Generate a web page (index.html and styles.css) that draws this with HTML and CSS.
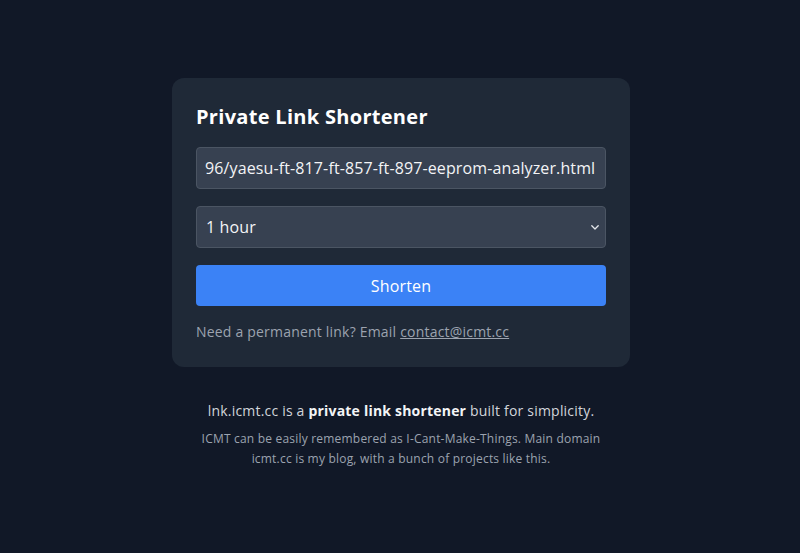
FILE: index.html
```html
<!DOCTYPE html>
<html lang="en">
<head>
<meta charset="utf-8">
<title>Private Link Shortener</title>
<link rel="stylesheet" href="styles.css">
</head>
<body>
<main class="page">
  <section class="card">
    <h1 class="title">Private Link Shortener</h1>
    <form class="form">
      <input class="field url" type="text" value="96/yaesu-ft-817-ft-857-ft-897-eeprom-analyzer.html">
      <div class="select-wrap">
        <select class="field select">
          <option>1 hour</option>
          <option>1 day</option>
          <option>1 week</option>
        </select>
        <svg class="chevron" viewBox="0 0 8 5"><path d="M0.8 0.8l3.2 3.2 3.2-3.2" fill="none" stroke="#e5e7eb" stroke-width="1.3" stroke-linecap="round" stroke-linejoin="round"/></svg>
      </div>
      <button class="btn" type="button">Shorten</button>
    </form>
    <p class="note">Need a permanent link? Email <a href="#">contact@icmt.cc</a></p>
  </section>
  <footer class="footer">
    <p class="lead">lnk.icmt.cc is a <strong>private link shortener</strong> built for simplicity.</p>
    <p class="small">ICMT can be easily remembered as I-Cant-Make-Things. Main domain icmt.cc is my blog, with a bunch of projects like this.</p>
  </footer>
</main>
</body>
</html>
```
FILE: styles.css
```css
* { box-sizing: border-box; }
html, body { margin: 0; padding: 0; }
body {
  background: #111827;
  font-family: "Open Sans", "Noto Sans", sans-serif;
  color: #f3f4f6;
  height: 553px;
  letter-spacing: 0.2px;
}
.page {
  display: flex;
  flex-direction: column;
  align-items: center;
  padding-top: 78px;
  padding-left: 2px;
}
.card {
  width: 458px;
  background: #1f2937;
  border-radius: 12px;
  padding: 24px 24px 25px;
}
.title {
  margin: 0 0 16px;
  padding-top: 1px;
  font-size: 20px;
  line-height: 28px;
  font-weight: 700;
  color: #ffffff;
  letter-spacing: 0.3px;
}
.form {
  display: flex;
  flex-direction: column;
  gap: 17px;
}
.field {
  display: block;
  width: 100%;
  height: 42px;
  padding: 0 9px;
  background: #374151;
  border: 1px solid #4b5563;
  border-radius: 4px;
  color: #f3f4f6;
  font-family: inherit;
  font-size: 16px;
  letter-spacing: 0.15px;
  outline: none;
}
.url {
  padding: 0 2px 0 8px;
  letter-spacing: 0.12px;
}
.select-wrap { position: relative; }
.select {
  appearance: none;
  -webkit-appearance: none;
  padding-left: 9px;
}
.chevron {
  position: absolute;
  right: 7px;
  top: 19px;
  width: 8px;
  height: 5px;
  pointer-events: none;
}
.btn {
  height: 41px;
  border: 0;
  border-radius: 4px;
  background: #3b82f6;
  color: #ffffff;
  font-family: inherit;
  font-size: 16px;
  letter-spacing: 0.2px;
}
.note {
  margin: 16px 0 0;
  font-size: 14px;
  line-height: 20px;
  color: #9ca3af;
}
.note a { color: #9ca3af; text-decoration: underline; }
.footer {
  margin-top: 34px;
  width: 430px;
  text-align: center;
}
.lead {
  margin: 0;
  font-size: 14px;
  line-height: 20px;
  color: #d1d5db;
}
.lead strong { color: #f3f4f6; }
.small {
  margin: 8px 0 0;
  font-size: 12px;
  line-height: 20px;
  color: #9ca3af;
}
```
